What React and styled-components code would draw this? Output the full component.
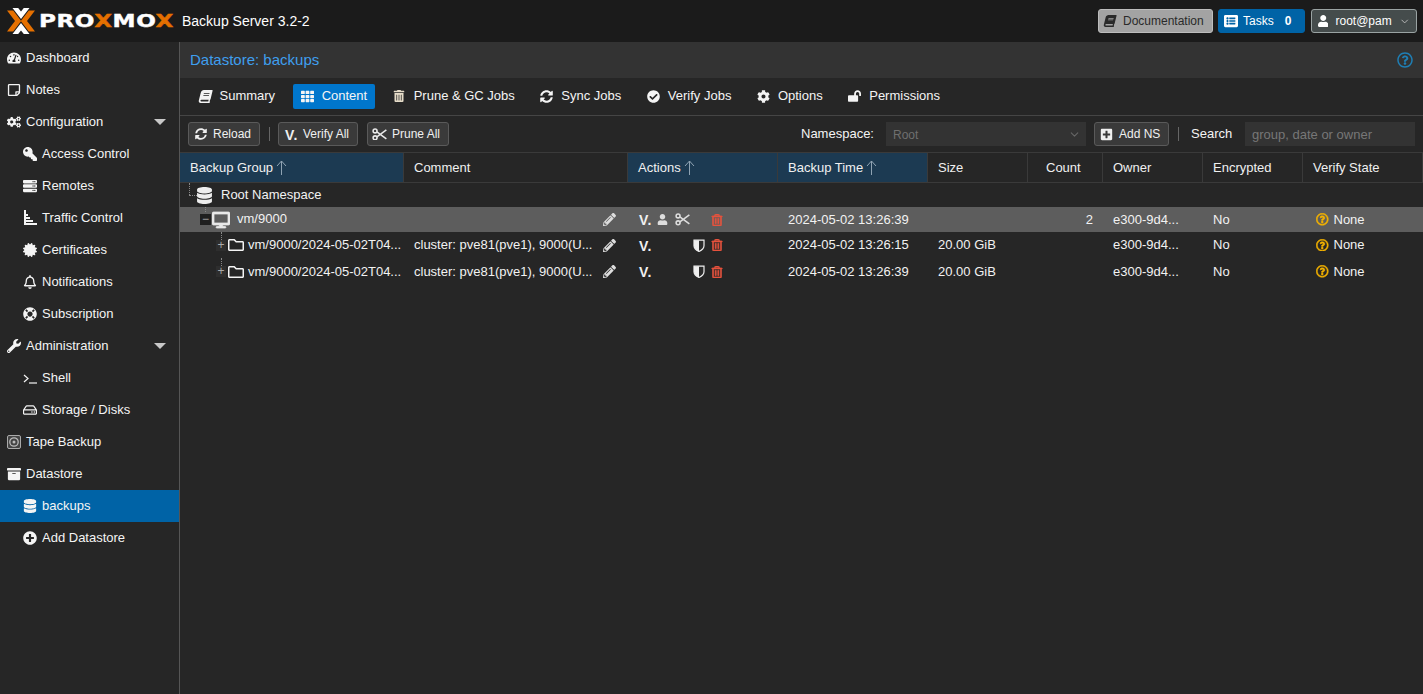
import React from "react";
import styled, { createGlobalStyle } from "styled-components";
import {
  FaTachometerAlt, FaRegStickyNote, FaCogs, FaKey, FaServer, FaCertificate, FaRegBell, FaLifeRing,
  FaWrench, FaRegHdd, FaArchive, FaDatabase, FaPlusCircle, FaBook, FaTh, FaTrashAlt, FaSyncAlt,
  FaCheckCircle, FaCog, FaLockOpen, FaPlusSquare, FaListAlt, FaUser, FaDesktop, FaRegFolder,
  FaPencilAlt, FaRegTrashAlt, FaRegQuestionCircle,
} from "react-icons/fa";
import { ChevronDown } from "lucide-react";

const Global = createGlobalStyle`
  html, body { margin: 0; height: 100%; background: #262626; overflow: hidden; }
  body { font: 13px/16px "Liberation Sans", Arial, sans-serif; color: #f2f2f2; }
  * { box-sizing: border-box; }
`;

const Page = styled.div`
  width: 1423px; height: 694px; display: flex; flex-direction: column; background: #262626;
`;
const TopBar = styled.header`
  height: 42px; flex: none; background: #1b1b1b; display: flex; align-items: center; padding: 0 6px 0 7px;
`;
const Logo = styled.div`
  display: flex; align-items: center; width: 175px; height: 42px;
`;
const LogoWord = styled.span`
  font: 700 17px/1 "DejaVu Sans", sans-serif; letter-spacing: 0.4px; color: #fff; margin-left: 4px;
  white-space: nowrap; transform: scaleX(1.36); transform-origin: left center;
  -webkit-text-stroke: 0.4px currentColor;
  b { color: #e57000; font-weight: 700; }
`;
const Version = styled.span`
  font-size: 14px; color: #fff; white-space: nowrap;
`;
const TopRight = styled.div`
  margin-left: auto; display: flex; gap: 5px; align-items: center;
`;
const TopButton = styled.div`
  height: 24px; border-radius: 3px; display: flex; align-items: center; font-size: 12px; white-space: nowrap;
  padding: 0 6px 0 ${p => p.$pl || 5}px;
  gap: ${p => p.$gap || 7}px;
  background: ${p => p.$bg};
  color: ${p => p.$fg};
  border: 1px solid ${p => p.$bd};
  width: ${p => p.$w}px;
  margin-left: ${p => p.$ml || 0}px;
`;
const TaskCount = styled.b`
  margin-left: 6px; color: #fff; font-size: 12px;
`;
const SkewBook = styled(FaBook)`
  transform: skewX(-14deg);
`;

const Body = styled.div`
  flex: 1; display: flex; min-height: 0;
`;
const Side = styled.nav`
  width: 180px; flex: none; border-right: 1px solid #555; background: #262626;
`;
const SideItem = styled.div`
  height: 32px; display: flex; align-items: center; position: relative; white-space: nowrap;
  padding-left: ${p => (p.$child ? 23 : 7)}px;
  padding-bottom: 1px;
  background: ${p => (p.$active ? "#0063a6" : "transparent")};
  color: #f4f4f4;
`;
const SideIcon = styled.span`
  width: 19px; flex: none; display: flex; align-items: center; justify-content: flex-start; font-size: 14px; color: #f4f4f4;
`;
const FlipKey = styled(FaKey)`
  transform: scaleX(-1);
`;
const Caret = styled.span`
  position: absolute; right: 13px; top: 13px; width: 0; height: 0;
  border-left: 6px solid transparent; border-right: 6px solid transparent; border-top: 6px solid #c8c8c8;
`;

const Main = styled.main`
  flex: 1; min-width: 0; display: flex; flex-direction: column;
`;
const PanelHead = styled.div`
  height: 36px; flex: none; background: #333; display: flex; align-items: center; justify-content: space-between;
  padding: 0 10px; font-size: 15px; color: #3f9fef;
`;
const Tabs = styled.div`
  height: 38px; flex: none; display: flex; align-items: center; gap: 10px; padding: 0 0 1px 10.5px; border-bottom: 1px solid #454545;
`;
const Tab = styled.div`
  height: 25px; display: flex; align-items: center; padding: 0 7.5px 0 8px; gap: 8px; border-radius: 2px; white-space: nowrap; color: #f4f4f4;
  background: ${p => (p.$active ? "#0076cc" : "transparent")};
`;
const TabIcon = styled.span`
  width: 13px; display: flex; justify-content: center; font-size: 13px; color: ${p => p.$c || "#f4f4f4"};
`;
const Toolbar = styled.div`
  height: 37px; flex: none; display: flex; align-items: center; padding: 0 8px; border-bottom: 1px solid #3a3a3a; font-size: 12px;
`;
const ToolButton = styled.div`
  height: 24px; display: flex; align-items: center; gap: ${p => p.$gap || 6}px; padding: 0 6px 0 ${p => p.$pl || 6}px; background: #3a3a3a; border: 1px solid #5a5a5a;
  border-radius: 3px; white-space: nowrap; color: #f0f0f0;
  width: ${p => p.$w}px;
  margin-left: ${p => p.$ml || 0}px;
  svg { flex: none; }
`;
const Sep = styled.span`
  width: 1px; height: 14px; background: #666; margin: 0 8px 0 9px;
`;
const VMark = styled.span`
  font: 700 14px/1 "Liberation Sans", sans-serif; color: ${p => p.$c || "#f0f0f0"}; letter-spacing: 0.5px; width: ${p => p.$w || 13}px; display: inline-block; padding-top: 1px;
`;
const Spacer = styled.span` flex: 1; `;
const FormLabel = styled.span`
  color: #f4f4f4; font-size: 13px; white-space: nowrap; width: ${p => p.$w}px; margin-left: ${p => p.$ml || 0}px;
`;
const Combo = styled.div`
  width: 200px; height: 24px; background: #333; color: #6f6f6f; display: flex; align-items: center; justify-content: space-between; padding: 1px 5px 0 7px; margin-right: 8px;
`;
const SearchBox = styled.div`
  width: 170px; height: 24px; background: #333; color: #777; padding: 1px 7px 0; display: flex; align-items: center; font-size: 13px;
`;

const cols = "224px 224px 150px 150px 100px 75px 100px 100px 120px";
const HeadRow = styled.div`
  height: 30px; flex: none; display: grid; grid-template-columns: ${cols}; border-bottom: 1px solid #3a3a3a;
`;
const HeadCell = styled.div`
  display: flex; align-items: center; padding-left: ${p => p.$pl || 10}px; gap: 3px; border-right: 1px solid #3a3a3a; white-space: nowrap; color: #f0f0f0;
  background: ${p => (p.$sorted ? "#1c3a52" : "transparent")};
`;
const Row = styled.div`
  height: ${p => p.$h}px; flex: none; display: grid; grid-template-columns: ${cols}; align-items: center;
  background: ${p => (p.$sel ? "#5d5d5d" : "transparent")};
`;
const Cell = styled.div`
  padding-left: 10px; padding-right: ${p => p.$pr || 6}px; white-space: nowrap;
  text-align: ${p => (p.$right ? "right" : "left")};
`;
const TreeCell = styled.div`
  position: relative; display: flex; align-items: center; height: 100%; padding-left: ${p => p.$pad}px; white-space: nowrap;
`;
const TreeText = styled.span`
  margin-left: ${p => p.$ml}px; padding-bottom: ${p => p.$up || 0}px;
`;
const Dots = styled.span`
  position: absolute; left: ${p => p.$x}px; top: ${p => p.$y}px; height: ${p => p.$h || 0}px; width: ${p => p.$w || 0}px;
  border-left: ${p => (p.$h ? "1px dotted #888" : "none")}; border-top: ${p => (p.$w ? "1px dotted #888" : "none")};
`;
const Expander = styled.span`
  width: ${p => p.$w}px; height: 11px; flex: none; display: flex; align-items: center; justify-content: center; background: ${p => p.$bg}; color: #aaa;
  font: 400 12px/11px "Liberation Sans", sans-serif; margin-right: ${p => p.$mr || 0}px;
`;
const CommentCell = styled.div`
  display: flex; align-items: center; padding: 0 12px 0 10px; min-width: 0; gap: 6px; font-size: 13px;
`;
const CommentText = styled.span`
  flex: 1; min-width: 0; white-space: nowrap;
`;
const Actions = styled.div`
  display: grid; grid-template-columns: repeat(5, 18px); padding-left: 11px; align-items: center; height: 100%;
`;
const Slot = styled.span`
  display: flex; align-items: center; color: ${p => p.$c || "#eee"};
`;
const StateCell = styled.div`
  display: flex; align-items: center; gap: 5px; padding-left: 13px;
`;

const LogoMark = () => (
  <svg width="28" height="26" viewBox="0 0 28 26">
    <path d="M0 2.5h6.2l8 10.5-8 10.5H0L8 13z" fill="#e57000" />
    <path d="M28 2.5h-6.2l-8 10.5 8 10.5H28L20 13z" fill="#e57000" />
    <path d="M5.5 0h5.7L14 3.6 16.8 0h5.7l-8.5 11z M5.5 26h5.7L14 22.4 16.8 26h5.7l-8.5-11z" fill="#fff" />
  </svg>
);
const TrafficIcon = () => (
  <svg width="14" height="15" viewBox="0 0 14 15" fill="#f4f4f4">
    <rect x="1" y="0" width="2" height="13" /><rect x="1" y="4" width="4" height="2" /><rect x="1" y="7" width="6" height="2" />
    <rect x="1" y="10" width="9" height="2" /><rect x="1" y="13" width="13" height="2" />
  </svg>
);
const TapeIcon = () => (
  <svg width="14" height="14" viewBox="0 0 14 14">
    <rect x="0.5" y="0.5" width="13" height="13" rx="1.5" fill="#444" stroke="#aaa" />
    <circle cx="7" cy="7" r="4.2" fill="none" stroke="#bbb" strokeWidth="1.3" />
    <circle cx="7" cy="7" r="1.5" fill="#bbb" />
  </svg>
);
const ShellIcon = () => (
  <svg width="14" height="12" viewBox="0 0 14 12" fill="none" stroke="#f4f4f4" strokeWidth="1.2">
    <path d="M1 3l4 3.5L1 10" /><path d="M6 11h8" />
  </svg>
);
const SortArrow = () => (
  <svg width="11" height="15" viewBox="0 0 11 15" fill="none" stroke="#8fa3b3" strokeWidth="1">
    <path d="M5.5 15V1M1 6l4.5-5L10 6" />
  </svg>
);
const ScissorIcon = ({ w = 15, c = "#e8e8e8" }) => (
  <svg width={w} height={w * 0.85} viewBox="0 0 15 13" fill="none" stroke={c} strokeWidth="1.6">
    <circle cx="3" cy="3" r="2" /><circle cx="3" cy="10" r="2" />
    <path d="M4.8 4l9.7 7M4.8 9l9.7-7" />
  </svg>
);
const ShieldIcon = () => (
  <svg width="12" height="13" viewBox="0 0 12 13">
    <path d="M1 1.2h10v5.5c0 2.8-2.5 4.6-5 5.8-2.5-1.2-5-3-5-5.8z" fill="#2a2a2a" stroke="#eee" strokeWidth="1.2" />
    <path d="M1 1.2h5v11.3c-2.5-1.2-5-3-5-5.8z" fill="#eee" />
  </svg>
);

const nav = [
  ["Dashboard", <FaTachometerAlt />],
  ["Notes", <FaRegStickyNote />],
  ["Configuration", <FaCogs />, { caret: true }],
  ["Access Control", <FlipKey />, { child: true }],
  ["Remotes", <FaServer />, { child: true }],
  ["Traffic Control", <TrafficIcon />, { child: true }],
  ["Certificates", <FaCertificate />, { child: true }],
  ["Notifications", <FaRegBell />, { child: true }],
  ["Subscription", <FaLifeRing />, { child: true }],
  ["Administration", <FaWrench />, { caret: true }],
  ["Shell", <ShellIcon />, { child: true }],
  ["Storage / Disks", <FaRegHdd />, { child: true }],
  ["Tape Backup", <TapeIcon />],
  ["Datastore", <FaArchive />],
  ["backups", <FaDatabase />, { child: true, active: true }],
  ["Add Datastore", <FaPlusCircle />, { child: true }],
];
const tabs = [
  ["Summary", <SkewBook />],
  ["Content", <FaTh />, true],
  ["Prune & GC Jobs", <FaTrashAlt size={12} />, false, "#e6dcc8"],
  ["Sync Jobs", <FaSyncAlt />],
  ["Verify Jobs", <FaCheckCircle />],
  ["Options", <FaCog />],
  ["Permissions", <FaLockOpen size={14} />],
];
const heads = [
  ["Backup Group", true], ["Comment"], ["Actions", true], ["Backup Time", true], ["Size"], ["Count", false, 18], ["Owner"], ["Encrypted"], ["Verify State"],
];
const comment = "cluster: pve81(pve1), 9000(U...";

const Trash = () => <FaRegTrashAlt size={12} color="#e7543f" stroke="#e7543f" strokeWidth={24} />;
const StateIcon = () => <FaRegQuestionCircle size={12.5} color="#f5b301" stroke="#f5b301" strokeWidth={20} />;

const SnapshotRow = ({ h, time, name }) => (
  <Row $h={h}>
    <TreeCell $pad={36}>
      <Dots $x={41} $y={0} $h={8} />
      <Expander $w={10} $bg="#2e2e2e" $mr={2}>+</Expander>
      <FaRegFolder size={16} color="#f4f4f4" />
      <TreeText $ml={4}>{name}</TreeText>
    </TreeCell>
    <CommentCell><CommentText>{comment}</CommentText><FaPencilAlt size={13} color="#ddd" /></CommentCell>
    <Actions>
      <Slot><VMark>V.</VMark></Slot><Slot /><Slot /><Slot><ShieldIcon /></Slot><Slot><Trash /></Slot>
    </Actions>
    <Cell>{time}</Cell>
    <Cell>20.00 GiB</Cell>
    <Cell />
    <Cell>e300-9d4...</Cell>
    <Cell>No</Cell>
    <StateCell><StateIcon />None</StateCell>
  </Row>
);

export default function App() {
  return (
    <Page>
      <Global />
      <TopBar>
        <Logo><LogoMark /><LogoWord>PRO<b>X</b>MO<b>X</b></LogoWord></Logo>
        <Version>Backup Server 3.2-2</Version>
        <TopRight>
          <TopButton $bg="#a3a3a3" $fg="#2a2a2a" $bd="#bdbdbd" $w={115}><SkewBook size={12} color="#2a2a2a" />Documentation</TopButton>
          <TopButton $bg="#0063a6" $fg="#fff" $bd="#0063a6" $w={87} $gap={5}><FaListAlt size={14} color="#fff" />Tasks<TaskCount>0</TaskCount></TopButton>
          <TopButton $bg="#454c4c" $fg="#fff" $bd="#9aa3a3" $w={106} $gap={7} $ml={1} $pl={6}><FaUser size={12} color="#fff" />root@pam<ChevronDown size={13} color="#bbb" /></TopButton>
        </TopRight>
      </TopBar>
      <Body>
        <Side>
          {nav.map(([label, icon, o = {}]) => (
            <SideItem key={label} $child={o.child} $active={o.active}>
              <SideIcon>{icon}</SideIcon>{label}
              {o.caret && <Caret />}
            </SideItem>
          ))}
        </Side>
        <Main>
          <PanelHead>
            Datastore: backups
            <FaRegQuestionCircle size={16} color="#1f7fb5" />
          </PanelHead>
          <Tabs>
            {tabs.map(([label, icon, active, c]) => (
              <Tab key={label} $active={active}><TabIcon $c={c}>{icon}</TabIcon>{label}</Tab>
            ))}
          </Tabs>
          <Toolbar>
            <ToolButton $w={72}><FaSyncAlt size={12} />Reload</ToolButton>
            <Sep />
            <ToolButton $w={80} $gap={5}><VMark>V.</VMark>Verify All</ToolButton>
            <ToolButton $w={82} $ml={9} $pl={4} $gap={5}><ScissorIcon />Prune All</ToolButton>
            <Spacer />
            <FormLabel $w={85}>Namespace:</FormLabel>
            <Combo>Root<ChevronDown size={13} color="#666" /></Combo>
            <ToolButton $w={75} $pl={5} $gap={6}><FaPlusSquare size={13} />Add NS</ToolButton>
            <Sep />
            <FormLabel $w={54} $ml={4}>Search</FormLabel>
            <SearchBox>group, date or owner</SearchBox>
          </Toolbar>
          <HeadRow>
            {heads.map(([label, sorted, pl]) => (
              <HeadCell key={label} $sorted={sorted} $pl={pl}>{label}{sorted && <SortArrow />}</HeadCell>
            ))}
          </HeadRow>
          <Row $h={24}>
            <TreeCell $pad={16}>
              <Dots $x={9} $y={0} $h={12} />
              <Dots $x={9} $y={12} $w={8} />
              <FaDatabase size={17} color="#eee" />
              <TreeText $ml={8}>Root Namespace</TreeText>
            </TreeCell>
          </Row>
          <Row $h={25} $sel>
            <TreeCell $pad={20}>
              <Dots $x={25} $y={0} $h={5} />
              <Expander $w={11} $bg="#1f1f1f">−</Expander>
              <FaDesktop size={18} color="#e8e8e8" stroke="#e8e8e8" strokeWidth={24} style={{ marginLeft: 1 }} />
              <TreeText $ml={7} $up={2}>vm/9000</TreeText>
            </TreeCell>
            <CommentCell><CommentText /><FaPencilAlt size={13} color="#ddd" /></CommentCell>
            <Actions>
              <Slot><VMark>V.</VMark></Slot><Slot><FaUser size={11} color="#ddd" /></Slot><Slot><ScissorIcon c="#ddd" /></Slot><Slot /><Slot><Trash /></Slot>
            </Actions>
            <Cell>2024-05-02 13:26:39</Cell>
            <Cell />
            <Cell $right $pr={10}>2</Cell>
            <Cell>e300-9d4...</Cell>
            <Cell>No</Cell>
            <StateCell><StateIcon />None</StateCell>
          </Row>
          <SnapshotRow h={26} time="2024-05-02 13:26:15" name="vm/9000/2024-05-02T04..." />
          <SnapshotRow h={27} time="2024-05-02 13:26:39" name="vm/9000/2024-05-02T04..." />
        </Main>
      </Body>
    </Page>
  );
}
